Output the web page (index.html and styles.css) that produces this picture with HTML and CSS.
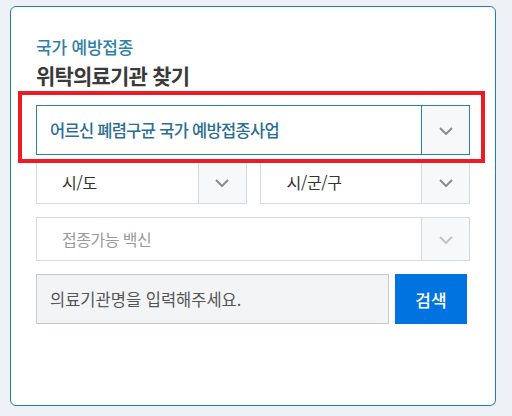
FILE: index.html
```html
<!DOCTYPE html>
<html lang="ko">
<head>
<meta charset="utf-8">
<link rel="stylesheet" href="styles.css">
</head>
<body>
<div class="card">
  <div class="eyebrow">국가 예방접종</div>
  <h1 class="title">위탁의료기관 찾기</h1>
  <div class="select select-main">
    <span class="select-text">어르신 폐렴구균 국가 예방접종사업</span>
    <span class="arrow"><svg width="14" height="8" viewBox="0 0 14 8"><polyline points="1,1 7,7 13,1" fill="none" stroke="#8c8c8c" stroke-width="2"/></svg></span>
  </div>
  <div class="row two">
    <div class="select">
      <span class="select-text dark">시/도</span>
      <span class="arrow"><svg width="14" height="8" viewBox="0 0 14 8"><polyline points="1,1 7,7 13,1" fill="none" stroke="#8c8c8c" stroke-width="2"/></svg></span>
    </div>
    <div class="select">
      <span class="select-text dark">시/군/구</span>
      <span class="arrow"><svg width="14" height="8" viewBox="0 0 14 8"><polyline points="1,1 7,7 13,1" fill="none" stroke="#8c8c8c" stroke-width="2"/></svg></span>
    </div>
  </div>
  <div class="row">
    <div class="select full">
      <span class="select-text muted">접종가능 백신</span>
      <span class="arrow"><svg width="14" height="8" viewBox="0 0 14 8"><polyline points="1,1 7,7 13,1" fill="none" stroke="#c4c4c4" stroke-width="2"/></svg></span>
    </div>
  </div>
  <div class="row search">
    <div class="input">의료기관명을 입력해주세요.</div>
    <button class="btn">검색</button>
  </div>
  <div class="highlight"></div>
</div>
</body>
</html>
```
FILE: styles.css
```css
* { box-sizing: border-box; }
html, body { margin: 0; padding: 0; }
body {
  background: #eef2f6;
  font-family: "Noto Sans CJK KR", "Noto Sans", sans-serif;
  width: 512px;
  height: 416px;
  padding: 6px 0 0 10px;
}
.card {
  position: relative;
  width: 486px;
  height: 400px;
  background: #fff;
  border: 1px solid #1f7fb4;
  border-radius: 6px;
  padding: 29px 25px 0 25px;
  display: flex;
  flex-direction: column;
}
.eyebrow {
  font-size: 17px;
  line-height: 22px;
  font-weight: 500;
  color: #2e80a6;
  letter-spacing: -0.2px;
}
.title {
  margin: 3px 0 16px 0;
  font-size: 21px;
  line-height: 28px;
  font-weight: 700;
  color: #3a3a3a;
  letter-spacing: -0.8px;
}
.select {
  display: flex;
  height: 44px;
  border: 1px solid #d6d9de;
  background: #fff;
}
.select-main {
  height: 50px;
  width: 434px;
  border-color: #2a80ad;
}
.select-text {
  flex: 1;
  display: flex;
  align-items: center;
  font-size: 16.5px;
  letter-spacing: -0.7px;
  padding-left: 13px;
  color: #2a6e94;
  font-weight: 500;
}
.select-text.dark { color: #333; font-weight: 400; padding-left: 25px; font-size: 16px; letter-spacing: -0.3px; }
.select-text.muted { color: #9a9a9a; font-weight: 400; padding-left: 25px; font-size: 16px; letter-spacing: -0.5px; }
.arrow {
  width: 48px;
  display: flex;
  align-items: center;
  justify-content: center;
  background: #f7f8fa;
  border-left: 1px solid #d6d9de;
  padding-top: 2px;
}
.select-main .arrow { border-left-color: #2a80ad; }
.row { display: flex; margin-top: 13px; width: 434px; }
.row.two { margin-top: 5px; gap: 13px; }
.row.two .select { flex: 1; }
.row.two .select:first-child .select-text { padding-left: 25px; }
.row.two .select:last-child .select-text { padding-left: 26px; }
.full { width: 434px; }
.search { gap: 6px; }
.input {
  width: 353px;
  height: 50px;
  background: #f3f4f6;
  border: 1px solid #c5c9cf;
  display: flex;
  align-items: center;
  padding-left: 13px;
  font-size: 16.5px;
  letter-spacing: 0;
  color: #555;
}
.btn {
  width: 72px;
  height: 50px;
  border: 0;
  background: #0073e1;
  color: #fff;
  font-family: inherit;
  font-size: 17px;
  font-weight: 500;
  padding: 0;
}
.highlight {
  position: absolute;
  left: 7px;
  top: 84px;
  width: 467px;
  height: 72px;
  border: 4px solid #ec1c24;
  pointer-events: none;
}
```
